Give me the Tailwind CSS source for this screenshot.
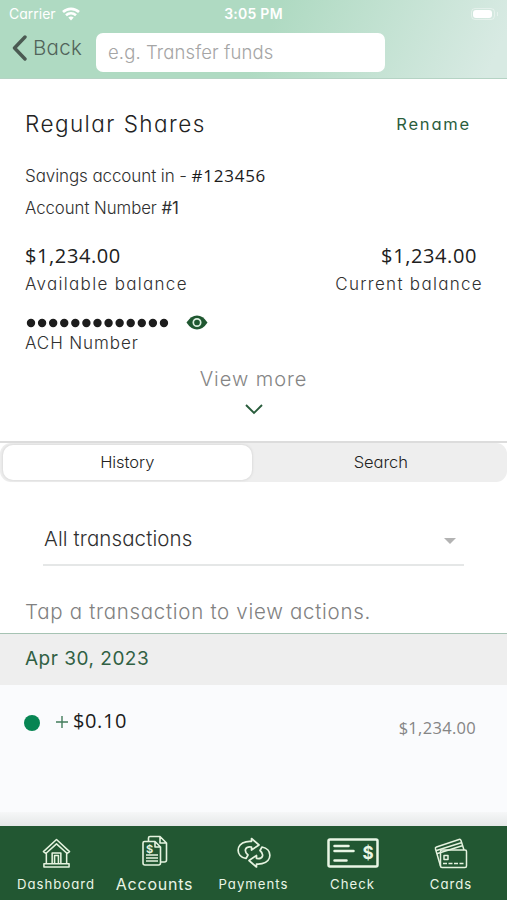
<!DOCTYPE html>
<html lang="en">
<head>
<meta charset="utf-8">
<title>Regular Shares</title>
<script src="https://cdn.jsdelivr.net/npm/@tailwindcss/browser@4"></script>
</head>
<body class="w-[507px] h-[900px] overflow-hidden bg-white font-['Inter',sans-serif] font-light text-[#303030] whitespace-nowrap [font-feature-settings:'cv11']">
<div class="flex flex-col h-[900px]">
  <header class="h-[79px] shrink-0 flex flex-col bg-[linear-gradient(115deg,#afdac2_0%,#afdac2_52%,#d8eae3_96%)] border-b border-[#b5d3c4]">
    <div class="h-[27px] grid grid-cols-3 items-center pl-[9px] pr-[9px] text-white text-[14px]">
      <div class="flex items-center gap-[6px] font-normal"><span class="tracking-[0px]">Carrier</span>
        <svg class="w-[18px] h-[14px]" viewBox="0 0 18 14" fill="none" stroke="#fff" stroke-width="2.6"><path d="M1 5C5.500 .8 12.500 .8 17 5M4 8.300C7 5.600 11 5.600 14 8.300"/><path d="M6.300 10.500Q9 8.500 11.700 10.500L9 13.500Z" fill="#fff" stroke="none"/></svg>
      </div>
      <span class="text-center font-semibold text-[14px] tracking-[0.25px]">3:05 PM</span>
      <div class="flex justify-end items-center gap-[2px]"><span class="w-[24px] h-[12px] rounded-[4px] border border-white/40 p-px flex"><span class="w-[19px] bg-white rounded-[3px]"></span></span><span class="w-[1px] h-[4px] bg-white/40"></span></div>
    </div>
    <div class="flex pl-[12px]">
      <div class="w-[84px] h-[42px] flex items-center gap-[6px]">
        <svg class="w-[15px] h-[26px]" viewBox="0 0 15 26" fill="none" stroke="#4b5a52" stroke-width="3.400" stroke-linecap="round" stroke-linejoin="round"><path d="M13 2L2.500 13L13 24"/></svg>
        <span class="text-[20.5px] text-[#52645a] tracking-[0.3px]">Back</span>
      </div>
      <div class="mt-[6px] w-[289px] h-[39px] bg-white rounded-[7px] pl-[12px] flex items-center text-[18.5px] text-[#a5a5a5] tracking-[0.1px]">e.g. Transfer funds</div>
    </div>
  </header>

  <section class="h-[364px] shrink-0 border-b-2 border-[#dcdcdc] pl-[25px] pr-[25px] pt-[29px]">
    <div class="h-[32px] flex items-center justify-between">
      <h1 class="text-[22.5px] tracking-[1.45px] text-[#222]">Regular Shares</h1>
      <span class="pr-[11px] text-[16.5px] font-normal tracking-[1.8px] text-[#2b5d3d]">Rename</span>
    </div>
    <div class="mt-[20px] h-[32px] leading-[32px] text-[17px] tracking-[-0.1px]">Savings account in - <span class="font-['Open_Sans'] font-normal tracking-[0.750px] text-[#1b1b1b]">#123456</span></div>
    <div class="h-[32px] leading-[32px] text-[16.800px] tracking-[-0.05px]">Account Number <span class="font-normal">#1</span></div>
    <div class="mt-[16px] flex justify-between font-['Open_Sans'] text-[20px] font-normal leading-[32px] tracking-[0.6px] text-[#202020]">
      <span>$1,234.00</span><span class="pr-[5px]">$1,234.00</span>
    </div>
    <div class="-mr-[1px] flex justify-between leading-[24px] text-[17px] tracking-[1.3px]"><span>Available balance</span><span>Current balance</span></div>
    <div class="mt-[16px] h-[22px] flex items-center">
      <svg class="w-[144px] h-[10px]" viewBox="0 0 144 10"><path d="M6 5H144" stroke="#1d1d1d" stroke-width="8.400" stroke-linecap="round" stroke-dasharray="0 11.080"/></svg>
      <svg class="ml-[17px] mt-[-1px] w-[22px] h-[15px]" viewBox="0 0 22 15"><path d="M.5 7.500Q5 .5 11 .5T21.500 7.500Q17 14.500 11 14.500T.5 7.500Z" fill="#1f5730"/><circle cx="11" cy="7.500" r="3.700" fill="none" stroke="#dcefe0" stroke-width="1.700"/></svg>
    </div>
    <div class="h-[18px] leading-[18px] text-[17px] tracking-[0.9px]">ACH Number</div>
    <div class="mt-[12px] h-[30px] leading-[30px] text-center text-[20px] tracking-[0.95px] text-[#858585]">View more</div>
    <svg class="mx-auto mt-[9px] w-[20px] h-[12px]" viewBox="0 0 20 12" fill="none" stroke="#285c3b" stroke-width="1.900"><path d="M2 2L10 10L18 2"/></svg>
  </section>

  <div class="h-[39px] shrink-0 bg-[#eee] rounded-[11px] p-[2px] grid grid-cols-2 text-[16.500px] leading-[34px] text-center text-[#222] tracking-[-0.05px]">
    <div class="bg-white rounded-[10px] shadow-[0_0_2px_1px_#dedede] ml-px mr-[2px]">History</div>
    <div class="pl-[3px]">Search</div>
  </div>

  <div class="mx-[43px] mt-[33px] h-[51px] shrink-0 border-b-2 border-[#e5e7e7] flex items-center justify-between pl-px pr-[8px]">
    <span class="text-[20.5px] tracking-[0.1px]">All transactions</span>
    <span class="mt-[2px] border-x-[6px] border-x-transparent border-t-[6px] border-t-[#b3b3b3]"></span>
  </div>
  <p class="pl-[25px] mt-[30px] h-[37px] shrink-0 leading-[32px] text-[20.5px] tracking-[0.700px] text-[#818181]">Tap a transaction to view actions.</p>
  <div class="h-[52px] shrink-0 border-t border-[#a6c3b3] bg-[#eee] pl-[25px] flex items-center text-[19px] font-normal tracking-[0.5px] text-[#316044]">Apr 30, 2023</div>
  <div class="flex-1 bg-[#fafbfd] pl-[24px] pr-[31px] flex flex-col">
    <div class="pt-[20px] h-[60px] flex items-center">
      <span class="mt-[-4px] w-[16px] h-[16px] rounded-full bg-[#078553]"></span>
      <svg class="ml-[16px] mt-[-7px] w-[12px] h-[12px]" viewBox="0 0 12 12" stroke="#427c5b" stroke-width="1.400"><path d="M6 0V12M0 6H12"/></svg>
      <span class="ml-[5px] mt-[-9px] font-['Open_Sans'] font-normal text-[20px] tracking-[0.600px] text-[#1b1b1b]">$0.10</span>
      <span class="ml-auto mt-[6px] font-['Open_Sans'] font-normal text-[16.500px] tracking-[0.3px] text-[#858585]">$1,234.00</span>
    </div>
    <div class="mt-auto -ml-[24px] -mr-[31px] h-[14px] bg-linear-to-b from-[#f6f7f8] to-[#e5e8e8]"></div>
  </div>

  <nav class="h-[74px] shrink-0 bg-[#225732] px-[7px] grid grid-cols-[98px_99px_99px_99px_98px] text-[#eaf5e6] font-normal text-[13.200px] tracking-[1px] text-center">
    <div class="flex flex-col items-center"><svg class="mt-[12px] w-[29px] h-[31px]" viewBox="0 0 30 32" fill="none" stroke="#e5f3df" stroke-width="1.600" stroke-linejoin="round"><path d="M1.500 14L15 1.500L28.500 14L26 16L15 6L4 16ZM4.500 16V26M25.500 16V26M10.500 26V15.500H19.500V26M13 26V18H17V26M2 26.500H28V30H2Z"/></svg><span class="mt-[5px] leading-[20px]">Dashboard</span></div>
    <div class="flex flex-col items-center"><svg class="mt-[9px] w-[26px] h-[32px]" viewBox="0 0 26 32" fill="none" stroke="#e5f3df" stroke-width="1.600" stroke-linejoin="round"><path d="M2.500 6.500H13L18.500 12V28Q18.500 30 16.500 30H3Q1 30 1 28V8Q1 6.500 2.500 6.500ZM13 6.500V12H18.500M6.500 6V3Q6.500 1.500 8 1.500H18L24.500 8V25Q24.500 27 22.500 27H18.500M18 1.500V8H24.500M4 20H16M4 23H16M4 26H16"/><text x="4" y="18" font-size="11" font-weight="700" font-family="Inter" fill="#e5f3df" stroke="none">$</text></svg><span class="mt-[7px] leading-[20px] text-[16px] tracking-[0.75px]">Accounts</span></div>
    <div class="flex flex-col items-center"><svg class="mt-[11px] w-[34px] h-[32px]" viewBox="0 0 34 32" fill="none" stroke="#e5f3df" stroke-width="1.700" stroke-linejoin="round"><path id="arrow" d="M9 21.500C-1.500 19.500 -1.500 7 9 4.800Q12 4.200 14.500 4.500V1.500L22 8L14.500 13V10C8 9 6.500 14 11 18Z"/><use href="#arrow" transform="rotate(180 17 15.750)"/></svg><span class="mt-[5px] leading-[20px]">Payments</span></div>
    <div class="flex flex-col items-center"><svg class="mt-[12px] w-[52px] h-[30px]" viewBox="0 0 52 30" fill="none" stroke="#e9f6e5" stroke-width="2.500" stroke-linecap="round"><rect x="1.500" y="1.500" width="49" height="27" rx="1.500"/><path d="M7.500 8H21.500M7.500 13H26.500M7.500 22.500H19.500"/><text x="35.500" y="20.500" font-size="17" font-weight="700" font-family="Inter" fill="#e9f6e5" stroke="none">$</text></svg><span class="mt-[6px] leading-[20px]">Check</span></div>
    <div class="flex flex-col items-center"><svg class="mt-[12px] w-[34px] h-[31px]" viewBox="0 0 34 31" fill="none" stroke="#e5f3df" stroke-width="1.500" stroke-linejoin="round"><rect x="6.500" y="12" width="26" height="17.500" rx="1.500"/><path d="M6.500 28L1.500 11Q1 9.500 2.500 9L25 1.500Q26.500 1 27 2.500L30 12M2.500 12.500L28 4.500M3.500 15.500L29 7.500"/><path d="M9 25.500H30" stroke-dasharray="4 1.500"/><rect x="10" y="17.500" width="4" height="4"/></svg><span class="mt-[5px] leading-[20px]">Cards</span></div>
  </nav>
</div>
</body>
</html>
